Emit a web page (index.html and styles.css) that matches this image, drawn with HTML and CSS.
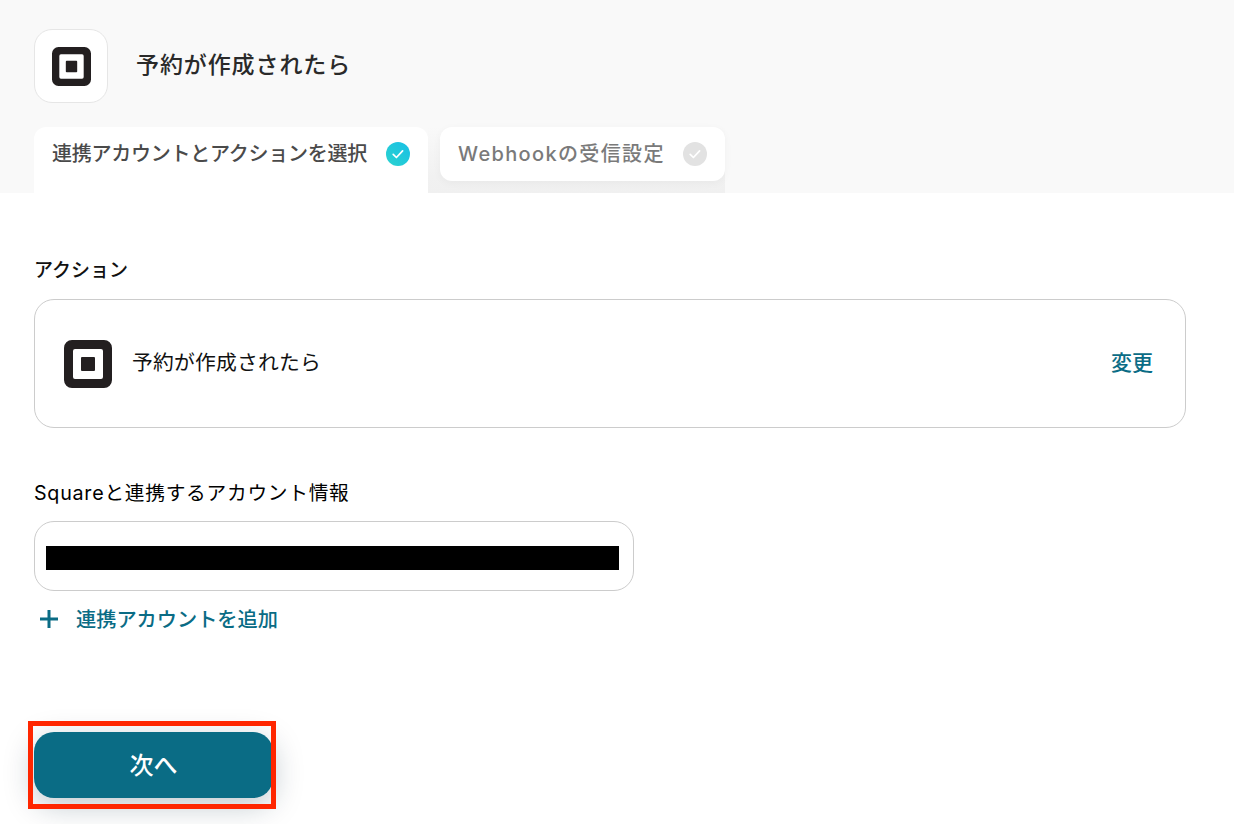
FILE: index.html
```html
<!DOCTYPE html>
<html lang="ja">
<head>
<meta charset="utf-8">
<title>予約が作成されたら</title>
<link rel="stylesheet" href="styles.css">
</head>
<body>
<header class="head">
  <div class="title-row">
    <div class="app-tile">
      <svg class="square-logo" width="39" height="39" viewBox="0 0 48 48"><path fill="#231f20" fill-rule="evenodd" d="M8 0h32a8 8 0 0 1 8 8v32a8 8 0 0 1-8 8H8a8 8 0 0 1-8-8V8a8 8 0 0 1 8-8zM11 9a2 2 0 0 0-2 2v26a2 2 0 0 0 2 2h26a2 2 0 0 0 2-2V11a2 2 0 0 0-2-2zM18 17h12a1 1 0 0 1 1 1v12a1 1 0 0 1-1 1H18a1 1 0 0 1-1-1V18a1 1 0 0 1 1-1z"/></svg>
    </div>
    <h1 class="title">予約が作成されたら</h1>
  </div>
  <div class="tabs">
    <div class="tab tab-active">
      <span>連携アカウントとアクションを選択</span>
      <svg class="check" width="24" height="24" viewBox="0 0 24 24"><defs><linearGradient id="g" x1="0" y1="1" x2="1" y2="0"><stop offset="0" stop-color="#2bd3cf"/><stop offset="1" stop-color="#18bfe6"/></linearGradient></defs><circle cx="12" cy="12" r="12" fill="url(#g)"/><path d="M7.2 12.4l3.2 3.1 6.2-6.6" fill="none" stroke="#fff" stroke-width="1.7" stroke-linecap="round" stroke-linejoin="round"/></svg>
    </div>
    <div class="tab-rest">
      <div class="tab tab-idle">
        <span>Webhookの受信設定</span>
        <svg class="check" width="24" height="24" viewBox="0 0 24 24"><circle cx="12" cy="12" r="12" fill="#e2e2e2"/><path d="M7.2 12.4l3.2 3.1 6.2-6.6" fill="none" stroke="#fff" stroke-width="1.7" stroke-linecap="round" stroke-linejoin="round"/></svg>
      </div>
    </div>
  </div>
</header>
<main class="main">
  <section class="section-action">
    <h2 class="label">アクション</h2>
    <div class="action-card">
      <svg width="48" height="48" viewBox="0 0 48 48"><path fill="#231f20" fill-rule="evenodd" d="M8 0h32a8 8 0 0 1 8 8v32a8 8 0 0 1-8 8H8a8 8 0 0 1-8-8V8a8 8 0 0 1 8-8zM11 9a2 2 0 0 0-2 2v26a2 2 0 0 0 2 2h26a2 2 0 0 0 2-2V11a2 2 0 0 0-2-2zM18 17h12a1 1 0 0 1 1 1v12a1 1 0 0 1-1 1H18a1 1 0 0 1-1-1V18a1 1 0 0 1 1-1z"/></svg>
      <span class="action-name">予約が作成されたら</span>
      <a class="change">変更</a>
    </div>
  </section>
  <section class="section-account">
    <h2 class="label label-account">Squareと連携するアカウント情報</h2>
    <div class="account-input"><div class="redact"></div></div>
    <a class="add-account">
      <svg class="plus" width="20" height="20" viewBox="0 0 20 20"><path d="M10 1v18M1 10h18" stroke="#0a6c85" stroke-width="3" fill="none"/></svg>
      <span>連携アカウントを追加</span>
    </a>
  </section>
  <div class="next-wrap">
    <button class="next">次へ</button>
  </div>
</main>
</body>
</html>
```
FILE: styles.css
```css
* { box-sizing: border-box; }
html, body { margin: 0; padding: 0; }
body {
  width: 1234px;
  height: 824px;
  overflow: hidden;
  background: #fff;
  font-family: Inter, "Noto Sans CJK JP", "Noto Sans", sans-serif;
  color: #111;
}
.head {
  height: 193px;
  background: #f9f9f9;
  padding: 29px 0 0 34px;
  display: flex;
  flex-direction: column;
}
.title-row {
  display: flex;
  align-items: center;
  gap: 28px;
  height: 74px;
}
.app-tile {
  width: 74px;
  height: 74px;
  background: #fff;
  border: 1px solid #e6e6e6;
  border-radius: 18px;
  display: flex;
  align-items: center;
  justify-content: center;
}
.title {
  margin: 0 0 2px;
  font-size: 23px;
  font-weight: 500;
  letter-spacing: .9px;
  color: #2a2a2a;
  line-height: 1;
}
.tabs {
  display: flex;
  margin-top: 24px;
  height: 66px;
}
.tab {
  display: flex;
  align-items: center;
  justify-content: space-between;
  background: #fff;
  font-size: 20px;
  padding: 0 18px;
}
.tab-active {
  width: 394px;
  height: 66px;
  padding-bottom: 13px;
  border-radius: 12px 12px 0 0;
  color: #4a4a4a;
  font-weight: 500;
}
.tab-active span { letter-spacing: -0.25px; margin-bottom: 2px; }
.tab-rest {
  width: 297px;
  height: 66px;
  padding-left: 12px;
  background: linear-gradient(#f9f9f9 0, #f1f1f1 75%, #f0f0f0 100%);
}
.tab-idle {
  width: 285px;
  height: 54px;
  border-radius: 12px;
  color: #7a7a7a;
  font-weight: 500;
  box-shadow: 0 2px 8px rgba(0,0,0,.04);
}
.tab-idle span { letter-spacing: 1.35px; margin-bottom: 3px; }
.main {
  padding: 0 48px 0 34px;
  display: flex;
  flex-direction: column;
}
.section-action { padding-top: 64px; }
.label {
  margin: 0;
  font-size: 19px;
  font-weight: 500;
  line-height: 28px;
  color: #111;
}
.action-card {
  margin-top: 14px;
  height: 129px;
  border: 1px solid #ccc;
  border-radius: 20px;
  display: flex;
  align-items: center;
  padding: 0 32px 0 29px;
}
.action-name {
  margin: 0 0 1px 20px;
  font-size: 20.8px;
  letter-spacing: .2px;
  color: #111;
  line-height: 1.4;
}
.change {
  margin: 0 0 1px auto;
  font-size: 21px;
  color: #0a6c85;
  font-weight: 500;
  line-height: 1.4;
}
.section-account { padding-top: 51px; }
.label-account { font-size: 19.7px; font-weight: 400; letter-spacing: .74px; color: #000; }
.account-input {
  margin-top: 14px;
  width: 600px;
  height: 70px;
  border: 1px solid #ccc;
  border-radius: 20px;
  padding: 24px 14px 0 11px;
}
.redact {
  height: 24px;
  background: #000;
}
.add-account {
  margin-top: 14px;
  display: flex;
  align-items: center;
  gap: 17px;
  padding-left: 5px;
  color: #0a6c85;
  font-size: 20.2px;
  font-weight: 500;
  line-height: 30px;
}
.plus { margin-top: -2px; }
.next-wrap {
  position: relative;
  margin-top: 86px;
  width: 248px;
  height: 88px;
  margin-left: -6px;
  padding: 11px 0 0 6px;
}
.next-wrap::after {
  content: "";
  position: absolute;
  inset: 0;
  border: 5px solid #ff2600;
}
.next {
  display: block;
  width: 239px;
  height: 66px;
  padding: 0 0 4px;
  border: 0;
  border-radius: 20px;
  background: #0a6c85;
  color: #fff;
  font-family: inherit;
  font-size: 24px;
  font-weight: 500;
  box-shadow: 0 8px 30px rgba(0,40,60,.25);
}
```
